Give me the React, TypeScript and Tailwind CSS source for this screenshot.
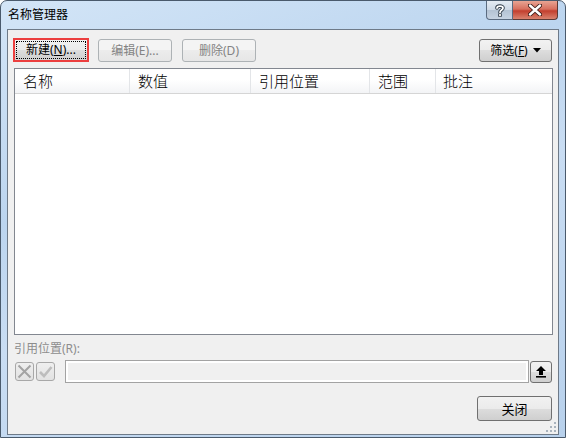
import React from "react";

const FONT = "font-['Noto_Sans','Noto_Sans_CJK_SC',sans-serif]";

function Btn({
  label,
  disabled,
  className,
}: {
  label: React.ReactNode;
  disabled?: boolean;
  className?: string;
}) {
  return (
    <div
      className={`flex items-center justify-center rounded-[3px] border text-[12px] leading-[14px] ${
        disabled
          ? "border-[#adb2b5] bg-[linear-gradient(to_bottom,#f4f4f4_0%,#f4f4f4_50%,#ececec_50%,#e6e6e6_100%)] text-[#838383]"
          : "border-[#707070] bg-[linear-gradient(to_bottom,#f2f2f2_0%,#ebebeb_50%,#dddddd_50%,#cfcfcf_100%)] text-black"
      } ${className ?? ""}`}
    >
      {label}
    </div>
  );
}

function Header() {
  const cols = [
    { t: "名称", w: "w-[115px]" },
    { t: "数值", w: "w-[121px]" },
    { t: "引用位置", w: "w-[119px]" },
    { t: "范围", w: "w-[66px]" },
  ];
  return (
    <div className="flex h-[25px] border-b border-[#d5d5d5] bg-[linear-gradient(to_bottom,#ffffff_0%,#ffffff_45%,#f3f4f6_100%)] text-[15px] font-light leading-[18px] text-black">
      {cols.map((c) => (
        <div key={c.t} className={`${c.w} flex items-center border-r border-[#e3e5e8] pl-[8px]`}>
          {c.t}
        </div>
      ))}
      <div className="flex flex-1 items-center pl-[7px]">批注</div>
    </div>
  );
}

export default function App() {
  return (
    <div className={`relative flex h-[438px] w-[566px] flex-col overflow-hidden rounded-t-[7px] border border-[#4a5a6c] bg-[linear-gradient(160deg,#d3e5f7_0%,#bcd5ef_35%,#c9ddf3_55%,#b8d1ec_100%)] ${FONT}`}>
      {/* title bar */}
      <div className="relative flex h-[28px] shrink-0 items-start">
        <div className="ml-[7px] mt-[6px] text-[12px] leading-[16px] text-black">名称管理器</div>
        <div className="ml-auto mr-[7px] flex">
          <div className="flex h-[19px] w-[27px] items-center justify-center rounded-bl-[4px] border border-t-0 border-[#5a6b80] bg-[linear-gradient(to_bottom,#e4ebf3_0%,#cdd8e5_50%,#b3c2d3_50%,#c6d3e2_100%)]">
            <svg width="10" height="13" viewBox="0 0 10 13">
              <path d="M2 4 C2 1.5 8 1.5 8 4 C8 6 5 6 5 8.2 M5 10.5 V11.5" stroke="#2c3845" strokeWidth="3.6" fill="none" strokeLinecap="round" />
              <path d="M2 4 C2 1.5 8 1.5 8 4 C8 6 5 6 5 8.2 M5 10.5 V11.5" stroke="#ffffff" strokeWidth="1.8" fill="none" strokeLinecap="round" />
            </svg>
          </div>
          <div className="flex h-[19px] w-[45px] items-center justify-center rounded-br-[4px] border border-l-0 border-t-0 border-[#5a3a36] bg-[linear-gradient(to_bottom,#e8a493_0%,#d7705f_45%,#c23f2e_55%,#d9836f_100%)]">
            <svg width="14" height="12" viewBox="0 0 14 12">
              <path d="M2 1.5 L12 10.5 M12 1.5 L2 10.5" stroke="#3a1c18" strokeWidth="4.2" strokeLinecap="round" />
              <path d="M2 1.5 L12 10.5 M12 1.5 L2 10.5" stroke="#ffffff" strokeWidth="2.4" strokeLinecap="round" />
            </svg>
          </div>
        </div>
      </div>

      {/* client area */}
      <div className="mx-[6px] mb-[7px] flex flex-1 flex-col border border-[#6e7a88] bg-[#f0f0f0]">
        <div className="mt-[8px] flex h-[24px] items-start">
          <div className="ml-[5px] h-[24px] w-[76px] border-2 border-[#ec3f3f] bg-[linear-gradient(to_bottom,#f2f2f2_0%,#ebebeb_50%,#dddddd_50%,#cfcfcf_100%)] p-[1px]">
            <div className="flex h-full w-full items-center justify-center border border-dotted border-black text-[12px] leading-[14px] text-black">
              新建(<span className="underline">N</span>)...
            </div>
          </div>
          <Btn disabled className="ml-[9px] mt-[1px] h-[23px] w-[74px]" label="编辑(E)..." />
          <Btn disabled className="ml-[10px] mt-[1px] h-[23px] w-[74px]" label="删除(D)" />
          <Btn
            className="ml-auto mr-[6px] mt-[1px] h-[23px] w-[73px]"
            label={
              <span className="flex items-center">
                筛选(<span className="underline">F</span>)
                <svg width="8" height="5" viewBox="0 0 8 5" className="ml-[5px]">
                  <path d="M0 0 H8 L4 4.5 Z" fill="#000" />
                </svg>
              </span>
            }
          />
        </div>

        {/* list */}
        <div className="ml-[6px] mr-[5px] mt-[6px] flex h-[267px] flex-col border border-[#828790] bg-white">
          <Header />
        </div>

        <div className="ml-[6px] mt-[7px] text-[12px] leading-[14px] text-[#8d8d8d]">引用位置(R):</div>

        <div className="mt-[4px] flex h-[23px] items-center">
          <div className="ml-[7px] flex h-[19px] w-[19px] items-center justify-center rounded-[3px] border border-[#a8a8a8] bg-[linear-gradient(to_bottom,#efefef,#e2e2e2)]">
            <svg width="15" height="15" viewBox="0 0 15 15">
              <path d="M1.5 1.5 L13.5 13.5 M13.5 1.5 L1.5 13.5" stroke="#a3a3a3" strokeWidth="2" />
            </svg>
          </div>
          <div className="ml-[2px] flex h-[19px] w-[19px] items-center justify-center rounded-[3px] border border-[#a8a8a8] bg-[linear-gradient(to_bottom,#efefef,#e2e2e2)]">
            <svg width="15" height="15" viewBox="0 0 15 15">
              <path d="M2 8 L6 12 L13.5 3" stroke="#bdbdbd" strokeWidth="2.6" fill="none" />
            </svg>
          </div>
          <div className="ml-[10px] h-[23px] w-[464px] border border-[#a3a3a3] bg-[#f0f0f0] shadow-[inset_0_0_0_2px_#ffffff]" />
          <div className="ml-[1px] flex h-[22px] w-[22px] items-center justify-center rounded-[3px] border border-[#707070] bg-[linear-gradient(to_bottom,#f2f2f2_0%,#ebebeb_50%,#dddddd_50%,#cfcfcf_100%)]">
            <svg width="12" height="13" viewBox="0 0 12 13">
              <path d="M6 1 L11 6 H8 V10 H4 V6 H1 Z" fill="#000" />
              <rect x="1" y="11" width="10" height="1.6" fill="#000" />
            </svg>
          </div>
        </div>

        <div className="mt-[13px] flex">
          <Btn className="ml-auto mr-[6px] h-[25px] w-[75px] text-[13px]" label="关闭" />
        </div>

        <div className="mt-auto flex justify-end">
          <svg width="12" height="12" viewBox="0 0 12 12" className="mb-[1px] mr-[1px]">
            <g fill="#a9b3bd">
              <rect x="9" y="1" width="2" height="2" />
              <rect x="5" y="5" width="2" height="2" />
              <rect x="9" y="5" width="2" height="2" />
              <rect x="1" y="9" width="2" height="2" />
              <rect x="5" y="9" width="2" height="2" />
              <rect x="9" y="9" width="2" height="2" />
            </g>
          </svg>
        </div>
      </div>
    </div>
  );
}
